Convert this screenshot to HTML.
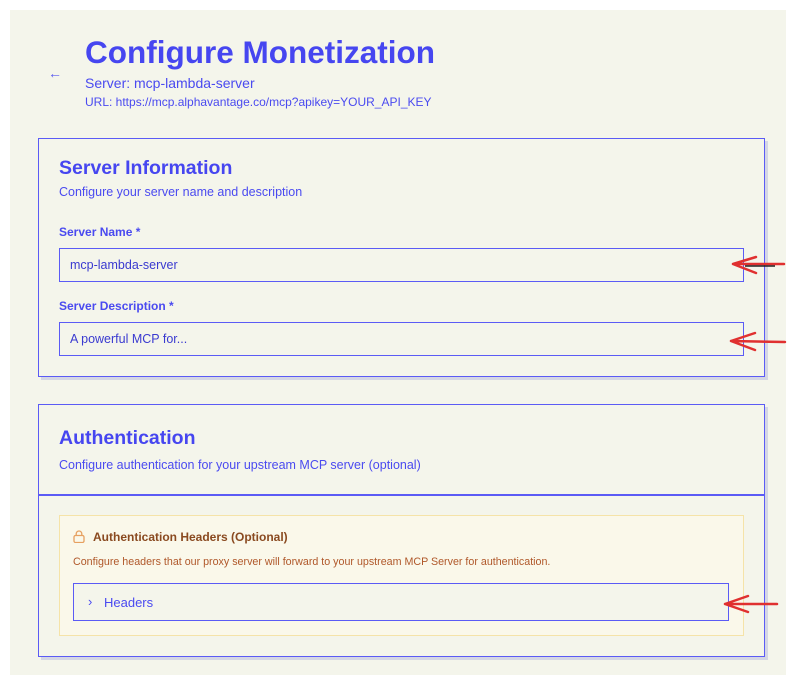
<!DOCTYPE html>
<html><head><style>
*{box-sizing:border-box;margin:0;padding:0}
body{width:796px;height:683px;background:#fff;font-family:"Liberation Sans",sans-serif;position:relative;overflow:hidden;color:#4a4af0}
.bg{position:absolute;left:10px;top:10px;width:776px;height:665px;background:#f4f5eb}
.a{position:absolute;white-space:nowrap}
.card{position:absolute;left:38px;width:727px;border:1.5px solid #5b5bf5;box-shadow:3px 3px 0 #d4d6e4}
.inp{position:absolute;left:59px;width:685px;height:34px;border:1.5px solid #5b5bf5;font-size:12.5px;padding:9px 10px;color:#3a3ad0}
</style></head><body>
<div class="bg"></div>
<div class="a" style="left:48px;top:65px;font-size:14px;color:#5a5af0">&larr;</div>
<div class="a" style="left:85px;top:34px;font-size:31.5px;font-weight:bold;color:#4646f0">Configure Monetization</div>
<div class="a" style="left:85px;top:75px;font-size:14px;color:#4a4af0">Server: mcp-lambda-server</div>
<div class="a" style="left:85px;top:95px;font-size:12px;color:#4a4af0">URL: https://mcp.alphavantage.co/mcp?apikey=YOUR_API_KEY</div>

<div class="card" style="top:138px;height:239px"></div>
<div class="a" style="left:59px;top:157px;font-size:19.5px;font-weight:bold;color:#4646f0">Server Information</div>
<div class="a" style="left:59px;top:185px;font-size:12.5px">Configure your server name and description</div>
<div class="a" style="left:59px;top:225px;font-size:12px;font-weight:bold">Server Name *</div>
<div class="inp" style="top:248px">mcp-lambda-server</div>
<div class="a" style="left:59px;top:299px;font-size:12px;font-weight:bold">Server Description *</div>
<div class="inp" style="top:322px">A powerful MCP for...</div>

<div class="card" style="top:404px;height:253px"></div>
<div style="position:absolute;left:38px;top:494px;width:727px;height:1.5px;background:#5b5bf5"></div>
<div class="a" style="left:59px;top:427px;font-size:19.5px;font-weight:bold;color:#4646f0">Authentication</div>
<div class="a" style="left:59px;top:458px;font-size:12.5px">Configure authentication for your upstream MCP server (optional)</div>
<div style="position:absolute;left:59px;top:515px;width:685px;height:121px;border:1px solid #f5e3a8;background:#faf8ea"></div>
<svg class="a" style="left:73px;top:530px" width="12" height="13" viewBox="0 0 12 13"><rect x="1" y="5.5" width="10" height="7" rx="1.5" fill="none" stroke="#e6a060" stroke-width="1.3"/><path d="M3.2 5.5V3.8a2.8 2.8 0 0 1 5.6 0v1.7" fill="none" stroke="#e6a060" stroke-width="1.3"/></svg>
<div class="a" style="left:93px;top:530px;font-size:12px;font-weight:bold;color:#8a4a20">Authentication Headers (Optional)</div>
<div class="a" style="left:73px;top:556px;font-size:10.7px;color:#b0582a">Configure headers that our proxy server will forward to your upstream MCP Server for authentication.</div>
<div style="position:absolute;left:73px;top:583px;width:656px;height:38px;border:1.5px solid #5b5bf5;background:#f4f5eb"></div>
<div class="a" style="left:88px;top:594px;font-size:13px">&#8250;</div>
<div class="a" style="left:104px;top:595px;font-size:13px;color:#4a4af0">Headers</div>

<svg style="position:absolute;left:0;top:0" width="796" height="683">
<g stroke="#e03030" stroke-width="2.5" fill="none" stroke-linecap="round">
<path d="M733 264 L784 264 M733 264 L756 257 M733 264 L756 273"/>
<path d="M731 341 L785 342 M731 341 L755 333 M731 341 L755 350"/>
<path d="M725 604 L777 604 M725 604 L748 596 M725 604 L748 612"/>
</g>
<path d="M745 266 L775 266" stroke="#222" stroke-width="1.5"/>
</svg>
</body></html>
